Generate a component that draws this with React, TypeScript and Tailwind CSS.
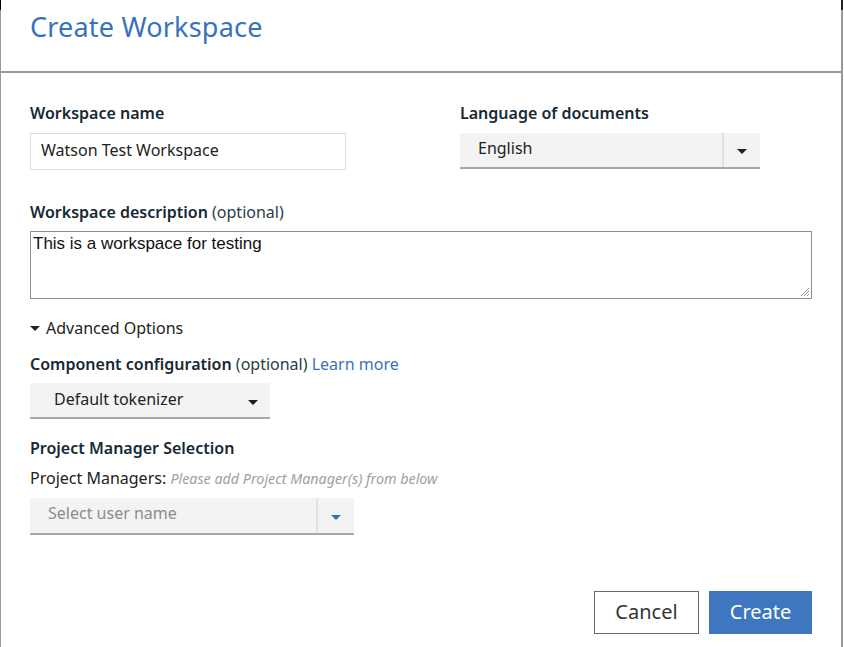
import React from "react";

const Caret = ({ color = "#1f1f1f" }: { color?: string }) => (
  <svg width="10" height="5" viewBox="0 0 10 5">
    <path d="M0 0 L10 0 L5 5 Z" fill={color} />
  </svg>
);

export default function App() {
  return (
    <div
      className="relative w-[844px] h-[647px] bg-white overflow-hidden"
      style={{ fontFamily: '"Noto Sans", "Open Sans", sans-serif' }}
    >
      <div className="absolute left-0 top-0 bottom-0 w-[1px] bg-[#9a9a9a]" />
      <div className="absolute left-[841px] top-0 bottom-0 w-[2px] bg-[#9a9a9a]" />
      <div className="absolute left-0 top-0 w-[1px] h-[10px] bg-black" />
      <div className="absolute left-[841px] top-0 w-[2px] h-[10px] bg-[#222]" />

      {/* header */}
      <div className="h-[73px] w-[843px] border-b-2 border-[#9a9a9a] pl-[30px] pt-[9px]">
        <h1 className="text-[27px] leading-[36px] text-[#3673bd] font-normal tracking-[0.2px]">Create Workspace</h1>
      </div>

      <div className="pl-[30px] pr-[32px] pt-[28px] text-[#152935]">
        <div className="grid grid-cols-[316px_300px] gap-x-[114px]">
          <div>
            <div className="text-[16px] leading-6 font-semibold">Workspace name</div>
            <div className="mt-[8px] h-[37px] border border-[#dcdcdc] flex items-center pl-[10px] text-[16px] text-[#222] pb-[3px]">
              Watson Test Workspace
            </div>
          </div>
          <div>
            <div className="text-[16px] leading-6 font-semibold">Language of documents</div>
            <div className="mt-[8px] h-[36px] bg-[#f3f3f3] border-b-2 border-[#a8a8a8] flex items-stretch">
              <div className="flex-1 flex items-center pl-[18px] text-[16px] text-[#222] pb-[4px]">English</div>
              <div className="w-[2px] bg-[#e0e0e0]" />
              <div className="w-[36px] flex items-center justify-center pt-[2px]">
                <Caret />
              </div>
            </div>
          </div>
        </div>

        <div className="mt-[30px] text-[16px] leading-6">
          <span className="font-semibold">Workspace description</span>{" "}
          <span className="text-[#2a3d4a]">(optional)</span>
        </div>
        <div
          className="relative mt-[7px] w-[782px] h-[68px] border border-[#8f8f8f] pl-[2px] pt-[1px] text-[17px] leading-[22px] text-[#111]"
          style={{ fontFamily: '"Liberation Sans", Arial, sans-serif' }}
        >
          This is a workspace for testing
          <svg className="absolute right-[1px] bottom-[1px]" width="11" height="11" viewBox="0 0 11 11">
            <path d="M10 2 L2 10 M10 5 L5 10 M10 8 L8 10" stroke="#9a9a9a" strokeWidth="1" />
          </svg>
        </div>

        <div className="mt-[17px] h-6 flex items-center text-[16px] text-[#222]">
          <span className="mr-[6px] mt-[1px]">
            <Caret color="#222" />
          </span>
          Advanced Options
        </div>

        <div className="mt-[12px] text-[16px] leading-6">
          <span className="font-semibold">Component configuration</span>{" "}
          <span className="text-[#2a3d4a]">(optional)</span>{" "}
          <span className="text-[#3673bd]">Learn more</span>
        </div>
        <div className="mt-[7px] w-[240px] h-[36px] bg-[#f3f3f3] border-b-2 border-[#a8a8a8] flex items-center">
          <div className="flex-1 pl-[24px] text-[16px] text-[#222] pb-[2px]">Default tokenizer</div>
          <div className="w-[34px] flex justify-center pt-[4px]">
            <Caret />
          </div>
        </div>

        <div className="mt-[17px] text-[16px] leading-6 font-semibold">Project Manager Selection</div>
        <div className="mt-[6px] text-[16px] leading-6 text-[#222]">
          Project Managers:{" "}
          <span className="italic text-[14.3px] text-[#a0a0a0]">Please add Project Manager(s) from below</span>
        </div>
        <div className="mt-[7px] w-[324px] h-[37px] bg-[#f3f3f3] border-b-2 border-[#a8a8a8] flex items-stretch">
          <div className="flex-1 flex items-center pl-[18px] text-[16px] text-[#8c8c8c] pb-[5px]">Select user name</div>
          <div className="w-[2px] bg-[#e3e3e3]" />
          <div className="w-[36px] flex items-center justify-center pt-[4px]">
            <Caret color="#3673bd" />
          </div>
        </div>

        <div className="mt-[56px] flex justify-end w-[782px] gap-[10px]">
          <button className="w-[105px] h-[43px] border border-[#6b6b6b] bg-white text-[20px] text-[#333] pb-[1px]">Cancel</button>
          <button className="w-[103px] h-[43px] bg-[#3e76bf] text-white text-[20px] pb-[1px]">Create</button>
        </div>
      </div>
    </div>
  );
}
